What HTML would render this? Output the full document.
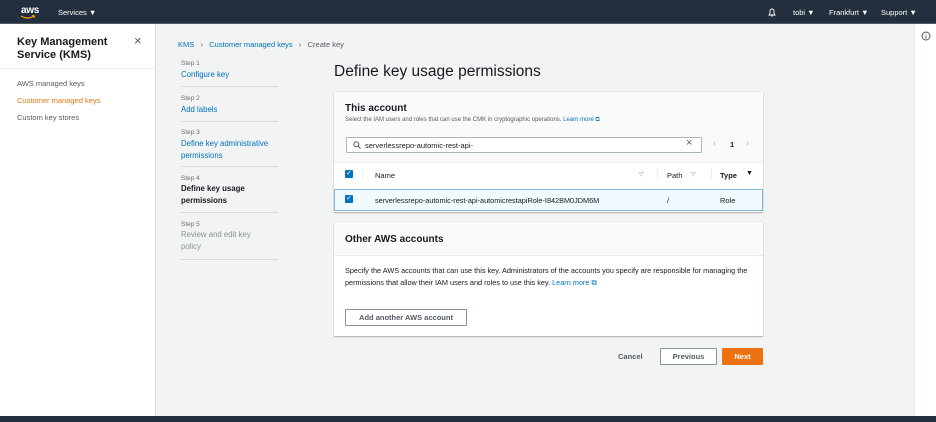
<!DOCTYPE html>
<html><head><meta charset="utf-8"><style>
*{box-sizing:border-box;margin:0;padding:0}
body{width:936px;height:422px;overflow:hidden;background:#f2f3f3;font-family:"Liberation Sans",sans-serif;color:#16191f;position:relative;font-size:8px}
.abs{position:absolute}
.top{left:0;top:0;width:936px;height:24px;background:#232f3e;border-bottom:1px solid #545b64}
.top span{position:absolute;color:#fff;font-size:7.5px;top:8px}
.side{left:0;top:24px;width:156px;height:392px;background:#fff;border-right:1px solid #d5dbdb}
.info{left:914px;top:24px;width:22px;height:392px;background:#fff;border-left:1px solid #eaeded}
.bot{left:0;top:416px;width:936px;height:6px;background:#232f3e}
a,.lnk{color:#0073bb;text-decoration:none}
.step .l{font-size:6.5px;color:#687078;position:absolute}
.step .t{font-size:7.8px;position:absolute;line-height:11.5px;width:95px}
.hr{position:absolute;height:1px;background:#d5dbdb;left:181px;width:97px}
.panel{background:#fff;box-shadow:0 1px 1px rgba(0,0,0,.25),0 0 1px rgba(0,0,0,.2)}
.btn{position:absolute;border:1px solid #545b64;background:#fff;font-weight:bold;font-size:7.5px;color:#545b64;text-align:center;border-radius:1px}
</style></head><body>
<div class="abs top">
<span style="left:21px;top:5px;font-size:10px;font-weight:bold;letter-spacing:-0.3px">aws</span>
<svg class="abs" style="left:20px;top:15px" width="16" height="5"><path d="M1 1 Q8 5 14 1 M12 0.5 L14.5 1 L14 3" stroke="#f90" stroke-width="1.2" fill="none"/></svg>
<span style="left:58px">Services ▼</span>
<svg class="abs" style="left:767px;top:7px" width="10" height="10"><path d="M2 8 L3 6.5 V4 A2 2 0 0 1 7 4 V6.5 L8 8 Z M4.2 9 H5.8" stroke="#fff" fill="none" stroke-width=".9"/></svg>
<span style="left:793px">tobi ▼</span>
<span style="left:829px">Frankfurt ▼</span>
<span style="left:881px">Support ▼</span>
</div>
<div class="abs side">
<div class="abs" style="left:17px;top:12px;font-size:11px;font-weight:bold;line-height:13px">Key Management<br>Service (KMS)</div>
<div class="abs" style="left:134px;top:9px;font-size:13px;color:#545b64">×</div>
<div class="abs" style="left:0;top:44px;width:155px;height:1px;background:#eaeded"></div>
<div class="abs" style="left:17px;top:55px;font-size:7.5px;color:#545b64">AWS managed keys</div>
<div class="abs" style="left:17px;top:72px;font-size:7.5px;color:#ec7211">Customer managed keys</div>
<div class="abs" style="left:17px;top:89px;font-size:7.5px;color:#545b64">Custom key stores</div>
</div>
<div class="abs info"><svg class="abs" style="left:6px;top:7px" width="10" height="10"><circle cx="5" cy="5" r="4" stroke="#545b64" fill="none"/><path d="M5 4.5 V7.5 M5 2.6 V3.4" stroke="#545b64"/></svg></div>
<div class="abs bot"></div>

<div class="abs" style="left:178px;top:40px;font-size:7.5px;color:#545b64"><a>KMS</a> &nbsp;&nbsp;›&nbsp;&nbsp; <a>Customer managed keys</a> &nbsp;&nbsp;›&nbsp;&nbsp; Create key</div>

<div class="step">
<div class="l" style="left:181px;top:60px">Step 1</div><div class="t lnk" style="left:181px;top:69px">Configure key</div>
<div class="hr" style="top:86px"></div>
<div class="l" style="left:181px;top:95px">Step 2</div><div class="t lnk" style="left:181px;top:104px">Add labels</div>
<div class="hr" style="top:121px"></div>
<div class="l" style="left:181px;top:129px">Step 3</div><div class="t lnk" style="left:181px;top:138px">Define key administrative permissions</div>
<div class="hr" style="top:166px"></div>
<div class="l" style="left:181px;top:175px">Step 4</div><div class="t" style="left:181px;top:183px;font-weight:bold;width:80px">Define key usage permissions</div>
<div class="hr" style="top:212px"></div>
<div class="l" style="left:181px;top:221px">Step 5</div><div class="t" style="left:181px;top:229px;color:#879596;width:80px">Review and edit key policy</div>
<div class="hr" style="top:259px"></div>
</div>

<div class="abs" style="left:334px;top:63px;font-size:15.5px">Define key usage permissions</div>

<div class="abs panel" style="left:334px;top:92px;width:429px;height:120px">
<div class="abs" style="left:0;top:0;width:429px;height:70px;background:#fafafa"></div>
<div class="abs" style="left:11px;top:11px;font-size:10px;font-weight:bold">This account</div>
<div class="abs" style="left:11px;top:25px;font-size:6px;color:#545b64">Select the IAM users and roles that can use the CMK in cryptographic operations. <a>Learn more</a> <span style="color:#0073bb">⧉</span></div>
<div class="abs" style="left:12px;top:45px;width:356px;height:16px;border:1px solid #aab7b8;background:#fff;border-radius:1px"></div>
<svg class="abs" style="left:19px;top:49px" width="8" height="8"><circle cx="3.3" cy="3.3" r="2.5" stroke="#545b64" fill="none"/><path d="M5 5 L7.5 7.5" stroke="#545b64"/></svg>
<div class="abs" style="left:31px;top:49px;font-size:7.5px">serverlessrepo-automic-rest-api-</div>
<div class="abs" style="left:352px;top:45px;font-size:11px;color:#545b64">×</div>
<div class="abs" style="left:379px;top:46px;font-size:9px;color:#aab7b8">‹</div>
<div class="abs" style="left:396px;top:48px;font-size:7.5px;font-weight:bold">1</div>
<div class="abs" style="left:412px;top:46px;font-size:9px;color:#aab7b8">›</div>
<div class="abs" style="left:0;top:70px;width:429px;height:1px;background:#eaeded"></div>
<div class="abs" style="left:11px;top:78px;width:8px;height:8px;background:#0073bb;border-radius:1px;color:#fff;font-size:7px;line-height:8px;text-align:center">✓</div>
<div class="abs" style="left:28px;top:77px;width:1px;height:10px;background:#eaeded"></div>
<div class="abs" style="left:41px;top:79px;font-size:7.5px">Name</div>
<div class="abs" style="left:305px;top:79px;font-size:6px;color:#879596">▽</div>
<div class="abs" style="left:323px;top:77px;width:1px;height:10px;background:#eaeded"></div>
<div class="abs" style="left:333px;top:79px;font-size:7.5px">Path</div>
<div class="abs" style="left:357px;top:79px;font-size:6px;color:#879596">▽</div>
<div class="abs" style="left:377px;top:77px;width:1px;height:10px;background:#eaeded"></div>
<div class="abs" style="left:386px;top:79px;font-size:7.5px;font-weight:bold">Type</div>
<div class="abs" style="left:412px;top:78px;font-size:7px">▼</div>
<div class="abs" style="left:0;top:97px;width:429px;height:22px;background:#f1faff;border:1px solid #7db7d6"></div>
<div class="abs" style="left:11px;top:103px;width:8px;height:8px;background:#0073bb;border-radius:1px;color:#fff;font-size:7px;line-height:8px;text-align:center">✓</div>
<div class="abs" style="left:41px;top:104px;font-size:7.3px">serverlessrepo-automic-rest-api-automicrestapiRole-I842BM0JDM6M</div>
<div class="abs" style="left:333px;top:104px;font-size:7.5px">/</div>
<div class="abs" style="left:386px;top:104px;font-size:7.5px">Role</div>
</div>

<div class="abs panel" style="left:334px;top:222px;width:429px;height:114px">
<div class="abs" style="left:0;top:0;width:429px;height:34px;background:#fafafa;border-bottom:1px solid #eaeded"></div>
<div class="abs" style="left:11px;top:12px;font-size:10px;font-weight:bold">Other AWS accounts</div>
<div class="abs" style="left:11px;top:43px;font-size:7.3px;line-height:11.5px;width:410px;color:#16191f">Specify the AWS accounts that can use this key. Administrators of the accounts you specify are responsible for managing the permissions that allow their IAM users and roles to use this key. <a>Learn more</a> <span style="color:#0073bb">⧉</span></div>
<div class="btn" style="left:11px;top:87px;width:122px;height:17px;line-height:15px;border-color:#879596">Add another AWS account</div>
</div>

<div class="abs" style="left:618px;top:352px;font-size:7.5px;font-weight:bold;color:#545b64">Cancel</div>
<div class="btn" style="left:660px;top:348px;width:57px;height:17px;line-height:15px;border-color:#879596">Previous</div>
<div class="btn" style="left:722px;top:348px;width:41px;height:17px;line-height:15px;background:#ec7211;border-color:#ec7211;color:#fff">Next</div>
</body></html>
